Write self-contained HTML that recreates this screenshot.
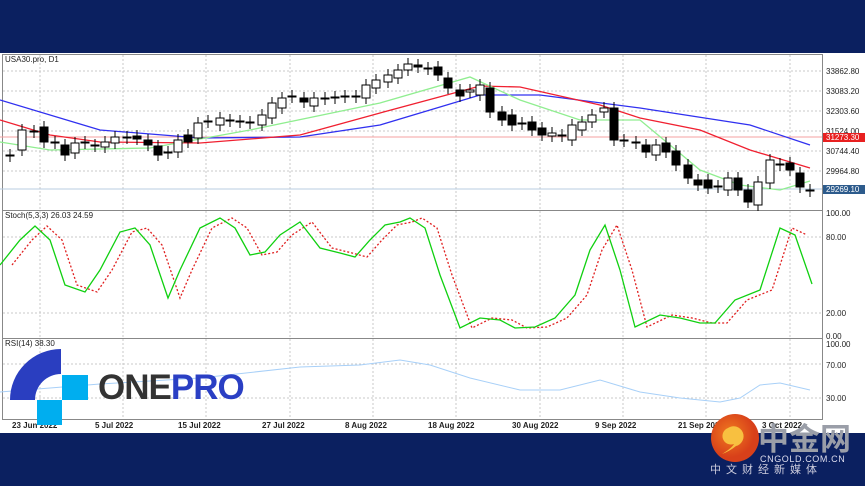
<!DOCTYPE html><html><head><meta charset="utf-8"><style>
body{margin:0;width:865px;height:486px;overflow:hidden;background:#0b2060;font-family:"Liberation Sans",sans-serif}
#c{position:absolute;left:0;top:53px}
</style></head><body>
<svg id="c" width="865" height="380" viewBox="0 53 865 380" xmlns="http://www.w3.org/2000/svg" font-family="Liberation Sans, sans-serif">
<rect x="0" y="53" width="865" height="380" fill="#fff"/>
<g id="grid" stroke="#c8c8c8" stroke-dasharray="2,2" stroke-width="1"></g>
<g stroke="#888" fill="none"><rect x="2.5" y="54.5" width="820" height="365"/>
<line x1="2" y1="210.5" x2="823" y2="210.5"/><line x1="2" y1="338.5" x2="823" y2="338.5"/></g>
<line x1="0" y1="137" x2="822" y2="137" stroke="#f6a0a0"/>
<line x1="0" y1="189" x2="822" y2="189" stroke="#b8cce0"/>
<g id="ma" fill="none" stroke-width="1.3"></g>
<g id="cd" stroke="#000" stroke-width="1"></g>
<g id="st" fill="none"></g>
<g font-size="8" fill="#222">
<text x="5" y="62">USA30.pro, D1</text>
<text x="5" y="218">Stoch(5,3,3) 26.03 24.59</text>
<text x="5" y="346">RSI(14) 38.30</text>
<text x="826" y="74">33862.80</text><text x="826" y="94">33083.20</text><text x="826" y="114">32303.60</text><text x="826" y="134">31524.00</text><text x="826" y="154">30744.40</text><text x="826" y="174">29964.80</text>
<text x="826" y="216">100.00</text><text x="826" y="240">80.00</text><text x="826" y="316">20.00</text><text x="826" y="339">0.00</text>
<text x="826" y="347">100.00</text><text x="826" y="368">70.00</text><text x="826" y="401">30.00</text>
</g>
<rect x="823" y="133" width="42" height="9" fill="#e82020"/><text x="826" y="140" font-size="8" fill="#fff">31273.30</text>
<rect x="823" y="185" width="42" height="9" fill="#2d5b8c"/><text x="826" y="192" font-size="8" fill="#fff">29269.10</text>
<g id="dt" font-size="8" fill="#222" font-weight="bold"></g>
<!-- logo -->
<path d="M61 349 L61 374 A26 26 0 0 0 35 400 L10 400 A51 51 0 0 1 61 349Z" fill="#2a3ec0"/>
<rect x="62" y="375" width="26" height="25" fill="#00aeef"/><rect x="37" y="400" width="25" height="25" fill="#00aeef"/>
<text x="98" y="399" font-size="35" font-weight="bold" fill="#333" letter-spacing="-1">ONE<tspan fill="#2a3fc4">PRO</tspan></text>
</svg>
<svg style="position:absolute;left:700px;top:410px" width="165" height="76">
<defs><radialGradient id="g" cx="40%" cy="40%"><stop offset="0" stop-color="#f07a20"/><stop offset="1" stop-color="#d8401a"/></radialGradient></defs>
<circle cx="35" cy="28" r="24" fill="url(#g)"/>
<path d="M28 18 a10 10 0 1 1 8 18 q-6 5 -14 8 q10 -6 12 -10 a8 8 0 0 1 -6 -16z" fill="#f8c040"/>
<text x="58" y="40" font-size="31" font-weight="bold" fill="#9a9ea8" font-family="Noto Sans CJK SC, sans-serif">中金网</text>
<text x="60" y="52" font-size="9" fill="#dde" letter-spacing="0.6">CNGOLD.COM.CN</text>
<text x="10" y="63" font-size="11" fill="#ccd" letter-spacing="5" font-family="Noto Sans CJK SC, sans-serif">中文财经新媒体</text>
</svg>
<script>
const ns="http://www.w3.org/2000/svg";
function el(p,t,a){const e=document.createElementNS(ns,t);for(const k in a)e.setAttribute(k,a[k]);document.getElementById(p).appendChild(e);return e;}
const dates=[[12,"23 Jun 2022"],[95,"5 Jul 2022"],[178,"15 Jul 2022"],[262,"27 Jul 2022"],[345,"8 Aug 2022"],[428,"18 Aug 2022"],[512,"30 Aug 2022"],[595,"9 Sep 2022"],[678,"21 Sep 2022"],[762,"3 Oct 2022"]];
dates.forEach(d=>{el("grid","line",{x1:d[0]+28,y1:55,x2:d[0]+28,y2:420});el("dt","text",{x:d[0],y:428}).textContent=d[1];});
[71,91,111,131,151,171,237,313,364,398].forEach(y=>el("grid","line",{x1:3,y1:y,x2:822,y2:y}));
function pl(g,pts,c,extra){const a=Object.assign({points:pts.map(p=>p.join(",")).join(" "),stroke:c,fill:"none"},extra||{});el(g,"polyline",a);}
pl("ma",[[0,100],[100,130],[200,138],[300,137],[380,125],[480,95],[540,95],[640,108],[750,125],[810,145]],"#3030f0");
pl("ma",[[0,120],[50,135],[100,142],[200,143],[300,135],[380,113],[480,86],[520,87],[600,105],[640,118],[700,130],[750,150],[810,168]],"#f02030");
pl("ma",[[0,142],[50,150],[150,148],[250,130],[380,103],[470,77],[520,100],[580,120],[640,120],[700,170],[740,185],[780,190],[810,181]],"#90ee90");
const c=[[10,155,156,0],[22,130,150,0],[34,131,132,1],[44,127,142,1],[55,142,143,0],[65,145,155,1],[75,143,153,0],[85,142,143,1],[95,145,146,1],[105,142,147,0],[115,137,143,0],[127,137,138,0],[137,136,139,1],[148,140,145,1],[158,146,155,1],[168,152,153,1],[178,140,152,0],[188,135,142,1],[198,123,138,0],[208,121,122,0],[220,118,125,0],[230,120,121,1],[240,121,122,1],[250,122,123,1],[262,115,125,0],[272,103,118,0],[282,98,108,0],[292,96,97,0],[304,98,102,1],[314,98,106,0],[325,98,99,0],[335,97,98,1],[345,96,97,0],[356,96,97,1],[366,85,98,0],[376,80,88,0],[388,75,82,0],[398,70,78,0],[408,64,70,0],[418,65,67,1],[428,68,69,0],[438,67,75,1],[448,78,88,1],[460,90,96,1],[470,90,92,0],[480,85,95,0],[490,88,112,1],[502,112,120,1],[512,115,125,1],[522,123,124,0],[532,122,130,1],[542,128,135,1],[552,133,136,0],[562,135,136,0],[572,125,140,0],[582,122,130,0],[592,115,122,0],[604,108,112,0],[614,108,140,1],[624,140,141,0],[636,142,143,1],[646,145,152,1],[656,145,155,0],[666,143,152,1],[676,151,165,1],[688,165,178,1],[698,180,185,1],[708,180,188,1],[718,186,187,1],[728,178,190,0],[738,178,190,1],[748,190,202,1],[758,182,205,0],[770,160,183,0],[780,164,165,0],[790,163,170,1],[800,173,187,1],[810,190,191,0]];
c.forEach(k=>{el("cd","line",{x1:k[0],y1:k[1]-6,x2:k[0],y2:k[2]+6});el("cd","rect",{x:k[0]-4,y:k[1],width:8,height:Math.max(1,k[2]-k[1]),fill:k[3]?"#000":"#fff"});});
const s=[[0,265],[20,240],[35,226],[50,240],[65,285],[85,292],[100,270],[120,232],[135,228],[150,245],[168,298],[180,270],[200,228],[220,218],[235,228],[250,255],[265,252],[280,235],[300,222],[320,248],[340,253],[355,257],[370,240],[385,225],[400,222],[410,218],[425,228],[440,275],[460,328],[480,318],[500,320],[515,328],[535,327],[555,318],[575,295],[590,250],[605,225],[620,270],[635,327],[660,315],[680,318],[700,323],[715,323],[735,300],[760,290],[780,228],[795,235],[812,284]];
pl("st",s.map(p=>[p[0]+12,p[1]]).filter(p=>p[0]<=812),"#e02020",{"stroke-dasharray":"2,2","stroke-width":1.3});
pl("st",s,"#10d010",{"stroke-width":1.3});
pl("st",[[0,392],[100,384],[200,378],[300,367],[360,365],[400,360],[430,365],[470,378],[520,390],[560,390],[600,380],[640,392],[680,398],[720,402],[740,398],[760,385],[780,383],[810,390]],"#a8d0f8",{"stroke-width":1});
</script>
</body></html>
